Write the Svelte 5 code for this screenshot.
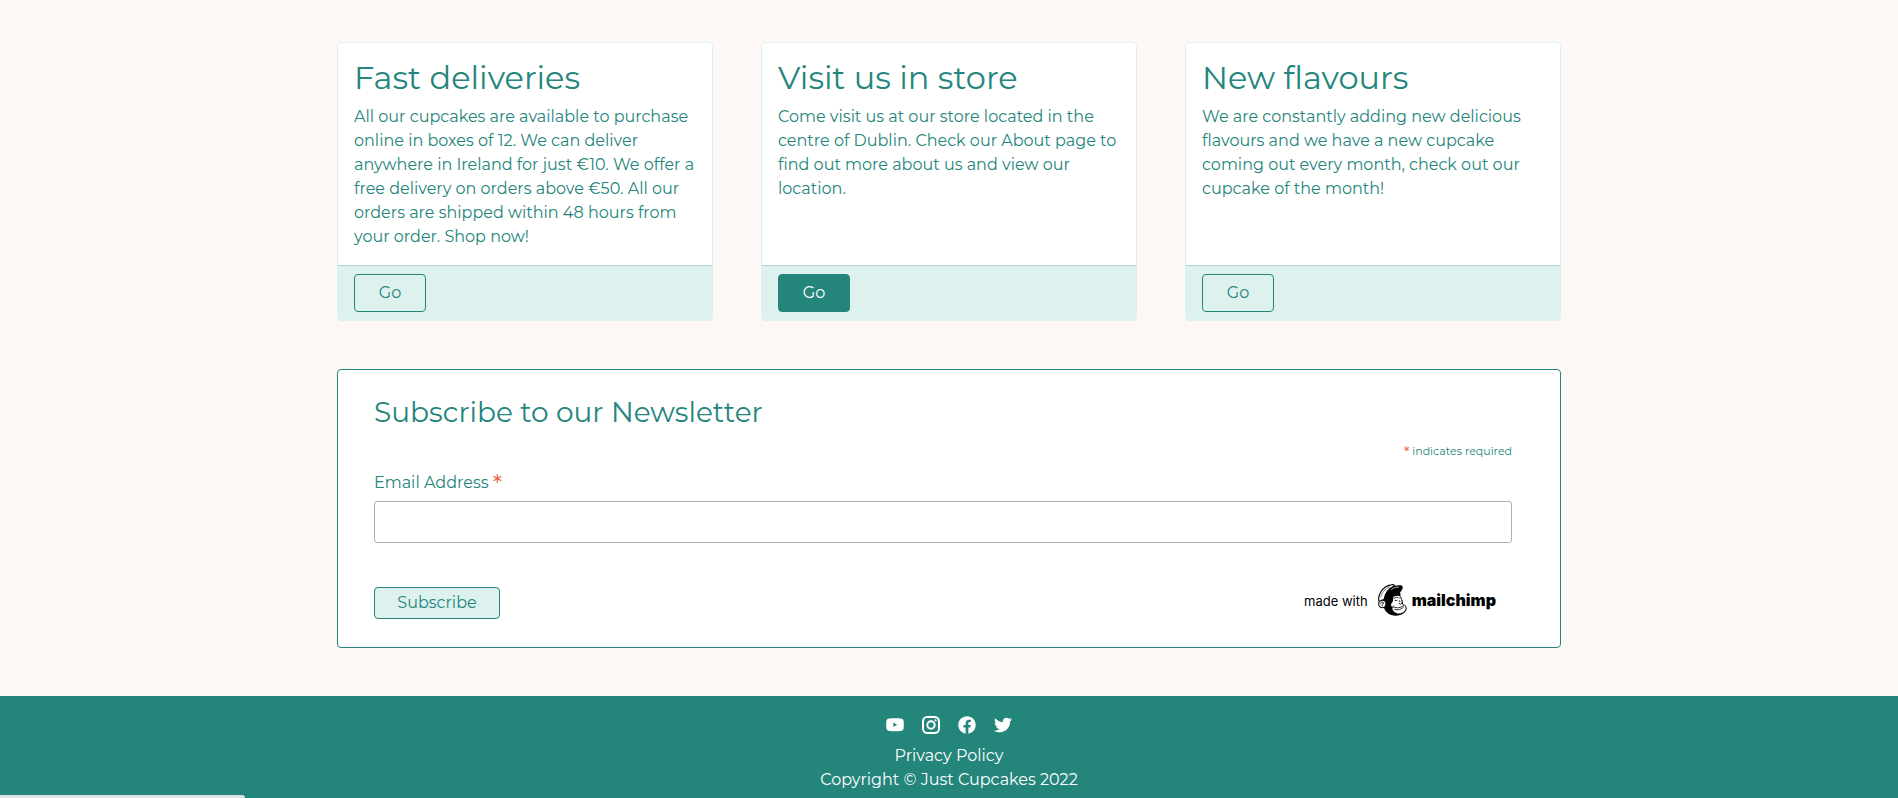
<script>
  const cards = [
    {
      title: 'Fast deliveries',
      text: 'All our cupcakes are available to purchase online in boxes of 12. We can deliver anywhere in Ireland for just €10. We offer a free delivery on orders above €50. All our orders are shipped within 48 hours from your order. Shop now!',
      active: false
    },
    {
      title: 'Visit us in store',
      text: 'Come visit us at our store located in the centre of Dublin. Check our About page to find out more about us and view our location.',
      active: true
    },
    {
      title: 'New flavours',
      text: 'We are constantly adding new delicious flavours and we have a new cupcake coming out every month, check out our cupcake of the month!',
      active: false
    }
  ];
  let email = $state('');
</script>

<main>
  <section class="cards">
    {#each cards as card}
      <article class="card">
        <div class="card-body">
          <h2>{card.title}</h2>
          <p>{card.text}</p>
        </div>
        <div class="card-footer">
          <button type="button" class="go" class:active={card.active}>Go</button>
        </div>
      </article>
    {/each}
  </section>

  <form class="newsletter" onsubmit={(e) => e.preventDefault()}>
    <h3>Subscribe to our Newsletter</h3>
    <div class="required"><span class="star">*</span> indicates required</div>
    <label for="email">Email Address <span class="star">*</span></label>
    <input id="email" type="email" bind:value={email} />
    <div class="actions">
      <button type="submit" class="subscribe">Subscribe</button>
      <a class="mailchimp" href="#mailchimp">
        <span class="made">made with</span>
        <svg width="30" height="32" viewBox="0 0 90 96" aria-hidden="true">
          <path d="M18 50C16 28 30 12 52 13c14 1 20 10 18 24 6 8 8 16 8 22 10 4 13 12 10 20C82 90 68 96 54 95 34 94 24 82 20 69z" fill="#000" />
          <path d="M8 55C-2 38 15 7 44 2c5-1 8 1 9 4-16 6-29 21-32 42-6-1-10 2-13 7z" fill="#fff" stroke="#000" stroke-width="3.4" stroke-linejoin="round" />
          <path d="M11 39C15 25 26 13 38 8" fill="none" stroke="#000" stroke-width="1.500" />
          <path d="M27 29C36 9 54 1 72 4c8 2 6 13-2 20-12-6-29-3-43 5z" fill="#000" />
          <path d="M43 17c7-6 15-8 23-8" fill="none" stroke="#fff" stroke-width="2" />
          <circle cx="16" cy="60" r="11" fill="#fff" stroke="#000" stroke-width="3.2" />
          <path d="M10 59c1-7 10-6 10-1-6 0-5 5-3 9" fill="none" stroke="#000" stroke-width="2.5" />
          <path d="M50 38c9-5 19-4 22 4l3 19c10 2 13 10 10 17-5 9-18 13-27 9-9-3-13-10-12-17-5-4-5-10-1-14 5-5 2-11 5-18z" fill="#fff" />
          <path d="M52 43c4-4 8-4 11-2M68 42l4-1M54 50l6-1M68 50v3M66 58l4 3 4-3M50 69c10 5 21 2 30-4M53 76c10 4 19 0 26-6M49 66l-2 5" fill="none" stroke="#000" stroke-width="2.500" stroke-linecap="round" />
        </svg>
        <span class="wordmark">mailchimp</span>
      </a>
    </div>
  </form>
</main>

<footer>
  <nav class="social" aria-label="Social media">
    <a href="#youtube" aria-label="YouTube">
      <svg viewBox="0 0 18 18"><path fill-rule="evenodd" d="M3.600 2.600C6.500 2.200 11.500 2.200 14.400 2.600 16.600 2.800 17.500 3.600 17.700 5.800c.2 2 .2 4 0 6-.2 2.200-1.100 3-3.300 3.200-2.900.3-7.900.3-10.800 0-2.200-.2-3.100-1-3.300-3.200-.2-2-.2-4 0-6 .2-2.200 1.100-3 3.300-3.200zM7.400 6.600v4.400L11.200 8.800z" /></svg>
    </a>
    <a href="#instagram" aria-label="Instagram">
      <svg viewBox="0 0 18 18"><g fill="none" stroke="#fff" stroke-width="2"><rect x="1" y="1" width="16" height="16" rx="4.200" /><circle cx="9" cy="9" r="3.700" /></g><circle cx="13.600" cy="4.400" r="1.100" /></svg>
    </a>
    <a href="#facebook" aria-label="Facebook">
      <svg viewBox="0 0 512 512"><path d="M504 256C504 119 393 8 256 8S8 119 8 256c0 123.780 90.690 226.380 209.250 245V327.690h-63V256h63v-54.640c0-62.150 37-96.480 93.670-96.480 27.140 0 55.520 4.840 55.520 4.840v61h-31.280c-30.800 0-40.410 19.120-40.410 38.730V256h68.780l-11 71.690h-57.780V501C413.310 482.380 504 379.780 504 256z" /></svg>
    </a>
    <a href="#twitter" aria-label="Twitter">
      <svg viewBox="0 0 512 512"><path d="M459.370 151.716c.325 4.548.325 9.097.325 13.645 0 138.720-105.583 298.558-298.558 298.558-59.452 0-114.680-17.219-161.137-47.106 8.447.974 16.568 1.299 25.340 1.299 49.055 0 94.213-16.568 130.274-44.832-46.132-.975-84.792-31.188-98.112-72.772 6.498.974 12.995 1.624 19.818 1.624 9.421 0 18.843-1.300 27.614-3.573-48.081-9.747-84.143-51.980-84.143-102.985v-1.299c13.969 7.797 30.214 12.670 47.431 13.319-28.264-18.843-46.781-51.005-46.781-87.391 0-19.492 5.197-37.360 14.294-52.954 51.655 63.675 129.300 105.258 216.365 109.807-1.624-7.797-2.599-15.918-2.599-24.040 0-57.828 46.782-104.934 104.934-104.934 30.213 0 57.502 12.670 76.670 33.137 23.715-4.548 46.456-13.320 66.599-25.340-7.798 24.366-24.366 44.833-46.132 57.827 21.117-2.273 41.584-8.122 60.426-16.243-14.292 20.791-32.161 39.308-52.628 54.253z" /></svg>
    </a>
  </nav>
  <a href="#privacy">Privacy Policy</a>
  <p>Copyright © Just Cupcakes 2022</p>
</footer>
<div class="status"></div>

<style>
  :global(body) {
    margin: 0;
    background: #fdf8f5;
    color: #24857b;
    font: 400 16px/24px Montserrat, Inter, sans-serif;
  }
  :global(*) {
    box-sizing: border-box;
  }
  main {
    max-width: 1272px;
    margin: 0 auto;
    padding: 42px 24px 48px;
  }
  .cards {
    display: grid;
    grid-template-columns: repeat(3, 1fr);
    gap: 48px;
    margin-bottom: 48px;
  }
  .card {
    display: flex;
    flex-direction: column;
    background: #fff;
    border: 1px solid #ddf1ee;
    border-radius: 4px;
    overflow: hidden;
  }
  .card-body {
    flex: 1;
    padding: 16px;
  }
  h2 {
    margin: 0 0 8px;
    font-size: 32px;
    line-height: 38px;
    font-weight: 400;
  }
  p {
    margin: 0;
  }
  .card-footer {
    padding: 8px 16px;
    background: #ddf1ee;
    border-top: 1px solid #b9d3d1;
  }
  button {
    display: block;
    padding: 0;
    font: inherit;
    color: #24857b;
    background: #ddf1ee;
    border: 1px solid #24857b;
    border-radius: 4px;
  }
  .go {
    width: 72px;
    height: 38px;
  }
  .go.active {
    color: #fff;
    background: #24857b;
  }
  .newsletter {
    display: flex;
    flex-direction: column;
    padding: 24px 48px 28px 36px;
    background: #fff;
    border: 1px solid #24857b;
    border-radius: 4px;
  }
  h3 {
    margin: 0;
    font-size: 28px;
    line-height: 36px;
    font-weight: 400;
  }
  .required {
    margin-top: 11px;
    font-size: 11px;
    line-height: 20px;
    text-align: right;
  }
  .star {
    color: #e85c41;
  }
  .required .star {
    font-size: 14px;
    line-height: 14px;
    vertical-align: -2px;
  }
  label {
    height: 24px;
    margin: 10px 0 6px;
    line-height: 24px;
  }
  label .star {
    font-size: 24px;
    line-height: 20px;
    vertical-align: -4px;
  }
  input {
    width: 100%;
    height: 42px;
    padding: 8px;
    font: inherit;
    color: inherit;
    border: 1px solid #abb0b2;
    border-radius: 3px;
  }
  .actions {
    display: flex;
    justify-content: space-between;
    align-items: flex-end;
    margin-top: 41px;
  }
  .subscribe {
    width: 126px;
    height: 32px;
  }
  .mailchimp {
    display: flex;
    align-items: center;
    margin: 0 16px 3px 0;
    color: #000;
    text-decoration: none;
  }
  .made {
    margin-right: 9px;
    padding-top: 2px;
    font: 400 13px/20px Inter, sans-serif;
  }
  .wordmark {
    margin-left: 5px;
    font: 900 16px/20px Inter, sans-serif;
  }
  footer {
    display: flex;
    flex-direction: column;
    align-items: center;
    padding: 20px 24px 6px;
    background: #24857b;
    color: #fff;
  }
  footer a {
    color: #fff;
    text-decoration: none;
  }
  .social {
    display: flex;
    gap: 18px;
    margin-bottom: 10px;
  }
  .social svg {
    display: block;
    width: 18px;
    height: 18px;
    fill: #fff;
  }
  .status {
    position: fixed;
    left: 0;
    bottom: 0;
    width: 245px;
    height: 3px;
    background: #dee1e1;
    border-top-right-radius: 3px;
  }
</style>
